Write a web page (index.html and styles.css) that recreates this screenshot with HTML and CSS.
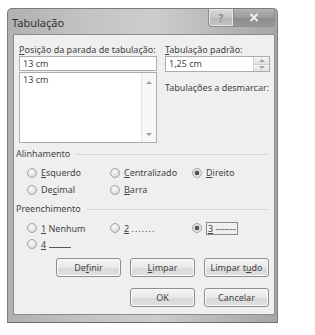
FILE: index.html
```html
<!DOCTYPE html>
<html lang="pt-BR">
<head>
  <meta charset="UTF-8" />
  <title>Tabulação</title>
  <link rel="stylesheet" href="styles.css">
</head>
<body>
  <div class="page">
    <div class="dialog">
      <div class="titlebar">
        <span class="title">Tabulação</span>
        <div class="caption-btns">
          <span class="cap help">?</span>
          <span class="cap close">
            <svg width="10" height="9" viewBox="0 0 10 9"><path d="M1.5 1 L8.5 8 M8.5 1 L1.5 8" stroke="#f0f0f0" stroke-width="2"/></svg>
          </span>
        </div>
      </div>

      <div class="client">
        <div class="top">
          <div class="col">
            <div class="label"><u>P</u>osição da parada de tabulação:</div>
            <div class="field">13 cm</div>
            <div class="listbox">
              <div class="list-items">13 cm</div>
              <div class="scroll">
                <span class="arrow up"></span>
                <span class="arrow down"></span>
              </div>
            </div>
          </div>
          <div class="col">
            <div class="label"><u>T</u>abulação padrão:</div>
            <div class="field spin">
              <span>1,25 cm</span>
              <div class="spin-btns">
                <span><i class="arrow up"></i></span>
                <span><i class="arrow down"></i></span>
              </div>
            </div>
            <div class="note">Tabulações a desmarcar:</div>
          </div>
        </div>

        <div class="group-head">Alinhamento</div>
        <div class="radios align">
          <div class="opt"><span class="radio"></span><u>E</u>squerdo</div>
          <div class="opt"><span class="radio"></span><u>C</u>entralizado</div>
          <div class="opt"><span class="radio checked"></span><u>D</u>ireito</div>
          <div class="opt"><span class="radio"></span>De<u>c</u>imal</div>
          <div class="opt"><span class="radio"></span><u>B</u>arra</div>
        </div>

        <div class="group-head">Preenchimento</div>
        <div class="radios fill">
          <div class="opt"><span class="radio"></span><u>1</u>&nbsp;Nenhum</div>
          <div class="opt"><span class="radio"></span><u>2</u>&nbsp;<span class="dots">.......</span></div>
          <div class="opt"><span class="radio checked"></span><span class="focus"><u>3</u> -------</span></div>
          <div class="opt"><span class="radio"></span><u>4</u> <span class="blank"></span></div>
        </div>

        <div class="buttons">
          <span class="btn">De<u>f</u>inir</span>
          <span class="btn"><u>L</u>impar</span>
          <span class="btn">Limpar t<u>u</u>do</span>
        </div>
        <div class="buttons second">
          <span class="btn">OK</span>
          <span class="btn">Cancelar</span>
        </div>
      </div>
    </div>
  </div>
</body>
</html>
```

FILE: styles.css
```css
* { box-sizing: border-box; margin: 0; padding: 0; }
body {
  background: #fff;
  font-family: "Noto Sans", "Open Sans", sans-serif;
  font-size: 9px;
  color: #444;
}
u { text-decoration: underline; text-underline-offset: 1px; }

.page { padding: 8px 0 0 7px; }

/* window frame */
.dialog {
  width: 271px;
  height: 315px;
  display: flex;
  flex-direction: column;
  padding: 0 2px 7px 5px;
  border: 1px solid #7c7c7c;
  border-bottom-color: #6e6e6e;
  border-radius: 5px 5px 0 0;
  background: linear-gradient(90deg, #b0b0b0, #c4c4c4 30%, #cdcdcd 55%, #b6b6b6 80%, #a6a6a6);
}
.titlebar {
  height: 25px;
  display: flex;
  align-items: flex-start;
  justify-content: space-between;
}
.title {
  padding-top: 7px;
  margin-left: -1px;
  font-size: 11px;
  line-height: 13px;
  color: #333;
}
.caption-btns { display: flex; }
.cap {
  height: 18px;
  display: flex;
  align-items: center;
  justify-content: center;
  border: 1px solid #8e8e8e;
  border-top: none;
}
.cap.help {
  width: 25px;
  border-radius: 0 0 0 4px;
  border-right: none;
  background: linear-gradient(#dadada, #c6c6c6 50%, #b8b8b8 51%, #c2c2c2);
  box-shadow: inset 0 0 0 1px #e6e6e6;
  color: #8a8a8a;
  font-size: 10px;
  font-weight: bold;
}
.cap.close {
  width: 42px;
  border-radius: 0 0 4px 0;
  background: linear-gradient(#b2b2b2, #9c9c9c 50%, #8c8c8c 51%, #989898);
}

.client {
  height: 281px;
  padding: 9px 5px 0 2px;
  border: 1px solid #8c8c8c;
  background: #efefef;
}

/* top fields */
.top {
  display: grid;
  grid-template-columns: 138px 105px;
  column-gap: 8px;
  padding-left: 3px;
}
.label { line-height: 12px; }
.field {
  height: 15px;
  padding: 0 3px;
  line-height: 13px;
  border: 1px solid #acacac;
  background: #fff;
}
.listbox {
  height: 71px;
  margin-top: 1px;
  display: flex;
  border: 1px solid #acacac;
  background: #fff;
}
.list-items { flex: 1; padding: 1px 3px; line-height: 12px; }
.scroll {
  width: 15px;
  display: flex;
  flex-direction: column;
  justify-content: space-between;
  align-items: center;
  padding: 8px 0 6px;
  border-left: 1px solid #e4e4e4;
  background: #f7f7f7;
}
.arrow {
  display: block;
  width: 0;
  height: 0;
  border-left: 3px solid transparent;
  border-right: 3px solid transparent;
}
.arrow.up { border-bottom: 3px solid #a0a0a0; }
.arrow.down { border-top: 3px solid #a0a0a0; }

.field.spin {
  height: 16px;
  display: flex;
  justify-content: space-between;
  padding-right: 0;
  line-height: 14px;
}
.spin-btns {
  width: 16px;
  display: flex;
  flex-direction: column;
  border-left: 1px solid #d0d0d0;
}
.spin-btns span {
  flex: 1;
  display: flex;
  align-items: center;
  justify-content: center;
  background: linear-gradient(#f6f6f6, #e2e2e2);
}
.spin-btns span + span { border-top: 1px solid #cfcfcf; }
.note { margin-top: 10px; line-height: 12px; }

/* groups */
.group-head {
  margin-top: 5px;
  display: flex;
  align-items: center;
  gap: 6px;
  line-height: 12px;
}
.group-head::after {
  content: '';
  flex: 1;
  border-top: 1px solid #d8d8d8;
}
.radios {
  display: grid;
  grid-template-columns: 83px 82px auto;
  padding-left: 11px;
  margin-top: 4px;
}
.radios.fill { margin-top: 5px; }
.opt {
  height: 17px;
  display: flex;
  align-items: center;
}
.fill .opt { height: 16px; }
.radio {
  width: 10px;
  height: 10px;
  margin-right: 4px;
  border-radius: 50%;
  border: 1px solid #a4a4a4;
  background: radial-gradient(circle at 40% 35%, #fbfbfb, #dcdcdc 70%);
}
.radio.checked {
  background: radial-gradient(circle, #555 0 2px, #cfcfcf 2.5px, #f0f0f0 70%);
}
.dots { letter-spacing: 1px; }
.focus {
  padding: 0 1px;
  line-height: 11px;
  border: 1px solid #8a8a8a;
}
.blank {
  display: inline-block;
  width: 22px;
  height: 8px;
  margin-left: 3px;
  border-bottom: 1px solid #555;
}

/* buttons */
.buttons {
  display: flex;
  justify-content: flex-end;
  gap: 9px;
  margin-top: 6px;
}
.buttons.second { margin-top: 11px; }
.btn {
  width: 65px;
  height: 19px;
  display: flex;
  align-items: center;
  justify-content: center;
  border: 1px solid #8e8e8e;
  border-radius: 3px;
  background: linear-gradient(#f5f5f5, #e8e8e8 50%, #dadada 51%, #dfdfdf);
  box-shadow: inset 0 0 0 1px #fafafa;
}
```
